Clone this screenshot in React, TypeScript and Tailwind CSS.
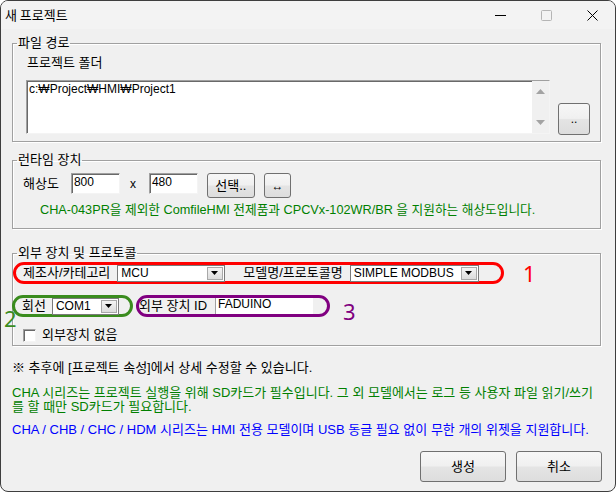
import React from 'react';

const btnFace =
  'border border-[#707070] rounded-[3px] bg-[linear-gradient(#f7f7f7_0%,#f0f0f0_48%,#e4e4e4_52%,#dddddd_100%)]';

const sunken =
  'bg-white border border-t-[#a0a0a0] border-l-[#a0a0a0] border-b-[#f4f4f4] border-r-[#f4f4f4] shadow-[inset_1px_1px_0_#696969]';

function Combo({ value, className }: { value: string; className: string }) {
  return (
    <div className={`flex items-center h-[17px] bg-white border border-[#7a7a7a] ${className}`}>
      <span className="flex-1 pl-[3px] text-[12px] leading-none">{value}</span>
      <span className="mr-px w-[16px] h-[13px] flex items-center justify-center border border-[#a8a8a8] bg-[linear-gradient(#f4f4f4,#dcdcdc)]">
        <svg width="8" height="4" viewBox="0 0 8 4">
          <path d="M0 0h7L3.5 4z" fill="#000" />
        </svg>
      </span>
    </div>
  );
}

function Group({ title, className, children }: { title: string; className: string; children: React.ReactNode }) {
  return (
    <fieldset
      className={`ml-[11px] w-[589px] border border-[#a0a0a0] shadow-[inset_1px_1px_0_#ffffff,1px_1px_0_#ffffff] ${className}`}
    >
      <legend className="ml-[4px] px-[1px] leading-[14px]">{title}</legend>
      {children}
    </fieldset>
  );
}

export default function App() {
  return (
    <div className="relative w-[616px] h-[492px] flex flex-col bg-[#f0f0f0] border border-[#3e3e3e] rounded-[8px] overflow-hidden text-[13px] text-black font-['Liberation_Sans','Noto_Sans_CJK_KR',sans-serif]">
      {/* Title bar */}
      <div className="h-[28px] shrink-0 flex items-center bg-[#f3f3f3]">
        <span className="pl-[4px] flex-1 text-[13px] font-['Noto_Sans_CJK_KR',sans-serif]">새 프로젝트</span>
        <div className="w-[46px] h-full flex items-center justify-center">
          <svg width="11" height="11" viewBox="0 0 11 11">
            <path d="M0 5.5h11" stroke="#000" strokeWidth="1" />
          </svg>
        </div>
        <div className="w-[46px] h-full flex items-center justify-center">
          <svg width="11" height="11" viewBox="0 0 11 11">
            <rect x="0.5" y="0.5" width="10" height="10" rx="1" fill="none" stroke="#b5b5b5" />
          </svg>
        </div>
        <div className="w-[46px] h-full flex items-center justify-center">
          <svg width="11" height="11" viewBox="0 0 11 11">
            <path d="M0.5 0.5l10 10M10.5 0.5l-10 10" stroke="#000" strokeWidth="1" />
          </svg>
        </div>
      </div>

      {/* 파일 경로 */}
      <Group title="파일 경로" className="mt-[7px] h-[106px]">
        <div className="pl-[13px] pt-[6px]">
          <div className="ml-px leading-[14px]">프로젝트 폴더</div>
          <div className="mt-[10px] flex items-end">
            <div className={`w-[524px] h-[54px] flex ${sunken}`}>
              <div className="flex-1 pl-[2px] pt-[1px] text-[12px] leading-[14px]">c:₩Project₩HMI₩Project1</div>
              <div className="w-[17px] flex flex-col items-center justify-between py-[8px] bg-[#f0f0f0]">
                <svg width="9" height="5" viewBox="0 0 9 5">
                  <path d="M0 5h9L4.5 0z" fill="#a3a3a3" />
                </svg>
                <svg width="9" height="5" viewBox="0 0 9 5">
                  <path d="M0 0h9L4.5 5z" fill="#a3a3a3" />
                </svg>
              </div>
            </div>
            <button className={`ml-[8px] w-[32px] h-[32px] mb-[-1px] text-[12px] ${btnFace}`}>..</button>
          </div>
        </div>
      </Group>

      {/* 런타임 장치 */}
      <Group title="런타임 장치" className="mt-[11px] h-[76px]">
        <div className="pl-[10px] pt-[6px]">
          <div className="flex items-start">
            <span className="h-[21px] flex items-center">해상도</span>
            <div className={`ml-[12px] w-[49px] h-[21px] pl-[2px] text-[12px] leading-[16px] ${sunken}`}>800</div>
            <span className="ml-[10px] h-[21px] flex items-center text-[12px]">x</span>
            <div className={`ml-[13px] w-[49px] h-[21px] pl-[2px] text-[12px] leading-[16px] ${sunken}`}>480</div>
            <button className={`ml-[9px] w-[48px] h-[25px] ${btnFace}`}>선택..</button>
            <button className={`ml-[9px] w-[27px] h-[25px] text-[12px] ${btnFace}`}>↔</button>
          </div>
          <div className="mt-[5px] ml-[17px] text-[12.7px] leading-[14px] text-[#008000]">
            CHA-043PR을 제외한 ComfileHMI 전제품과 CPCVx-102WR/BR 을 지원하는 해상도입니다.
          </div>
        </div>
      </Group>

      {/* 외부 장치 및 프로토콜 */}
      <Group title="외부 장치 및 프로토콜" className="mt-[17px] h-[100px]">
        <div className="pt-[2px]">
          <div className="flex items-center">
            <div className="w-[491px] h-[22px] flex items-center pl-[7px] border-[3px] border-[#ff0000] rounded-[11px]">
              <span>제조사/카테고리</span>
              <Combo value="MCU" className="ml-[7px] w-[108px]" />
              <span className="ml-[18px]">모델명/프로토콜명</span>
              <Combo value="SIMPLE MODBUS" className="ml-[7px] w-[129px]" />
            </div>
            <span className="ml-[19px] text-[22px] leading-none text-[#ff0000] font-['Noto_Sans',sans-serif]">1</span>
          </div>

          <div className="mt-[6px] flex items-center">
            <div className="ml-[-1px] w-[121px] h-[22px] flex items-center pl-[7px] border-[3px] border-[#3a8c1e] rounded-[11px]">
              <span>회선</span>
              <Combo value="COM1" className="ml-[6px] w-[67px]" />
            </div>
            <div className="ml-[3px] w-[194px] h-[22px] flex items-center border-[3px] border-[#800080] rounded-[11px] overflow-hidden">
              <span className="w-[76px] shrink-0">외부 장치 ID</span>
              <div className="w-[98px] h-[19px] pl-[2px] text-[12px] leading-[14px] bg-white border-l border-[#a0a0a0]">FADUINO</div>
            </div>
            <span className="ml-[13px] mt-[10px] text-[22px] leading-none text-[#800080] font-['Noto_Sans',sans-serif]">3</span>
          </div>

          <div className="mt-[6px] pl-[10px] flex items-center">
            <span className={`w-[13px] h-[13px] ${sunken}`} />
            <span className="ml-[6px] leading-[14px]">외부장치 없음</span>
          </div>
        </div>
      </Group>

      <span className="absolute left-[3px] top-[306px] text-[22px] leading-none text-[#3a8c1e] font-['Noto_Sans',sans-serif]">2</span>

      <div className="mt-[15px] ml-[11px] leading-[14px]">※ 추후에 [프로젝트 속성]에서 상세 수정할 수 있습니다.</div>
      <div className="mt-[11px] ml-[11px] leading-[14px] text-[#008000]">
        CHA 시리즈는 프로젝트 실행을 위해 SD카드가 필수입니다. 그 외 모델에서는 로그 등 사용자 파일 읽기/쓰기
        <br />를 할 때만 SD카드가 필요합니다.
      </div>
      <div className="mt-[9px] ml-[11px] leading-[14px] text-[#0000ff]">
        CHA / CHB / CHC / HDM 시리즈는 HMI 전용 모델이며 USB 동글 필요 없이 무한 개의 위젯을 지원합니다.
      </div>

      <div className="mt-[14px] pr-[13px] flex justify-end gap-[10px]">
        <button className={`w-[86px] h-[31px] ${btnFace}`}>생성</button>
        <button className={`w-[86px] h-[31px] ${btnFace}`}>취소</button>
      </div>
    </div>
  );
}
